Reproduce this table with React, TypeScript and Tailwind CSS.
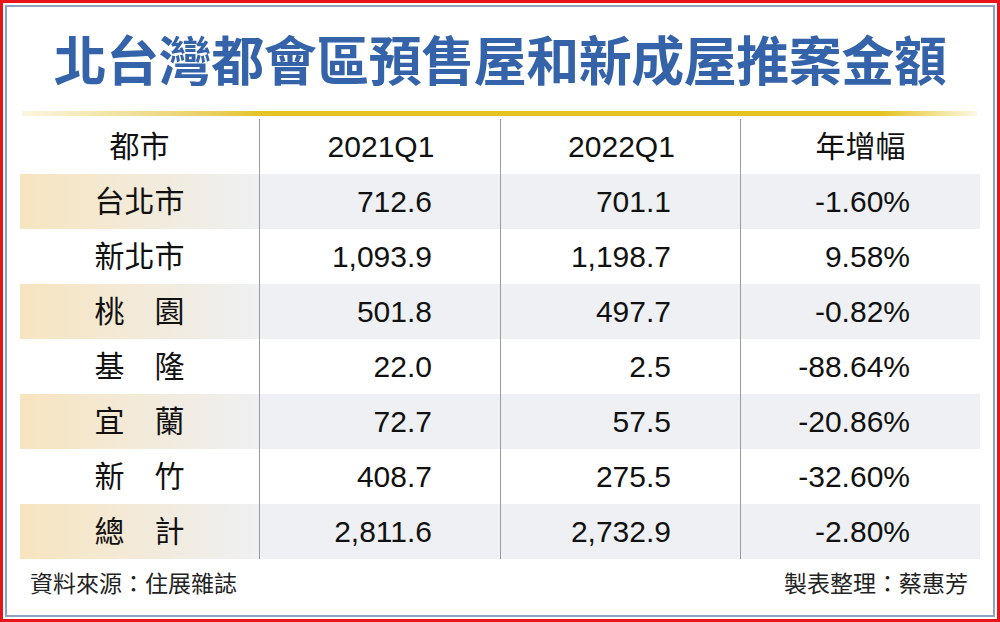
const rows = [
  { city: "台北市", a: "712.6", b: "701.1", c: "-1.60%" },
  { city: "新北市", a: "1,093.9", b: "1,198.7", c: "9.58%" },
  { city: "桃　園", a: "501.8", b: "497.7", c: "-0.82%" },
  { city: "基　隆", a: "22.0", b: "2.5", c: "-88.64%" },
  { city: "宜　蘭", a: "72.7", b: "57.5", c: "-20.86%" },
  { city: "新　竹", a: "408.7", b: "275.5", c: "-32.60%" },
  { city: "總　計", a: "2,811.6", b: "2,732.9", c: "-2.80%" },
];

const font = { fontFamily: '"Liberation Sans", "Noto Sans CJK TC", sans-serif' };

export default function App() {
  return (
    <div className="w-[1000px] h-[622px] bg-white border-[3px] border-[#e8141b] p-[2px]" style={font}>
      <div className="h-full border-[2px] border-[#8ea2c4] flex flex-col">
        {/* Title */}
        <div className="h-[104px] pb-[2px] flex items-center justify-center">
          <h1
            className="text-[53px] leading-none font-bold tracking-[-0.5px] text-[#3463a9]"
            style={{ fontFamily: '"Noto Sans CJK TC", sans-serif' }}
          >
            北台灣都會區預售屋和新成屋推案金額
          </h1>
        </div>
        <div className="mx-[15px] h-[5px] bg-linear-to-r from-[#fbf6e0] via-[#e4c421] via-25% to-[#e4c421]">
          <div className="h-full w-full bg-linear-to-r from-transparent from-90% to-white/90" />
        </div>

        {/* Table */}
        <div className="mx-[13px] mt-[3px] text-[30px] text-[#111]">
          <div className="grid grid-cols-[239px_241px_240px_240px] h-[55px] items-stretch">
            <div className="flex items-center justify-center">都市</div>
            <div className="flex items-center justify-center border-l border-[#9a9a9a] pl-[2px]">2021Q1</div>
            <div className="flex items-center justify-center border-l border-[#9a9a9a] pl-[2px]">2022Q1</div>
            <div className="flex items-center justify-center border-l border-[#9a9a9a]">年增幅</div>
          </div>
          {rows.map((r, i) => {
            const shaded = i % 2 === 0;
            return (
              <div key={r.city} className="grid grid-cols-[239px_241px_240px_240px] h-[55px]">
                <div
                  className={
                    "flex items-center justify-center " +
                    (shaded ? "bg-linear-to-r from-[#f7e4bf] to-[#eef0f2]" : "")
                  }
                >
                  {r.city}
                </div>
                <div
                  className={
                    "flex items-center justify-end pr-[68px] border-l border-[#9a9a9a] " +
                    (shaded ? "bg-[#eef0f3]" : "")
                  }
                >
                  {r.a}
                </div>
                <div
                  className={
                    "flex items-center justify-end pr-[69px] border-l border-[#9a9a9a] " +
                    (shaded ? "bg-[#eef0f3]" : "")
                  }
                >
                  {r.b}
                </div>
                <div
                  className={
                    "flex items-center justify-end pr-[70px] border-l border-[#9a9a9a] " +
                    (shaded ? "bg-[#eef0f3]" : "")
                  }
                >
                  {r.c}
                </div>
              </div>
            );
          })}
        </div>

        {/* Footer */}
        <div className="flex-1 flex items-center justify-between pl-[23px] pr-[25px] pb-[6px] text-[23px] text-[#222]">
          <span>資料來源：住展雜誌</span>
          <span>製表整理：蔡惠芳</span>
        </div>
      </div>
    </div>
  );
}
